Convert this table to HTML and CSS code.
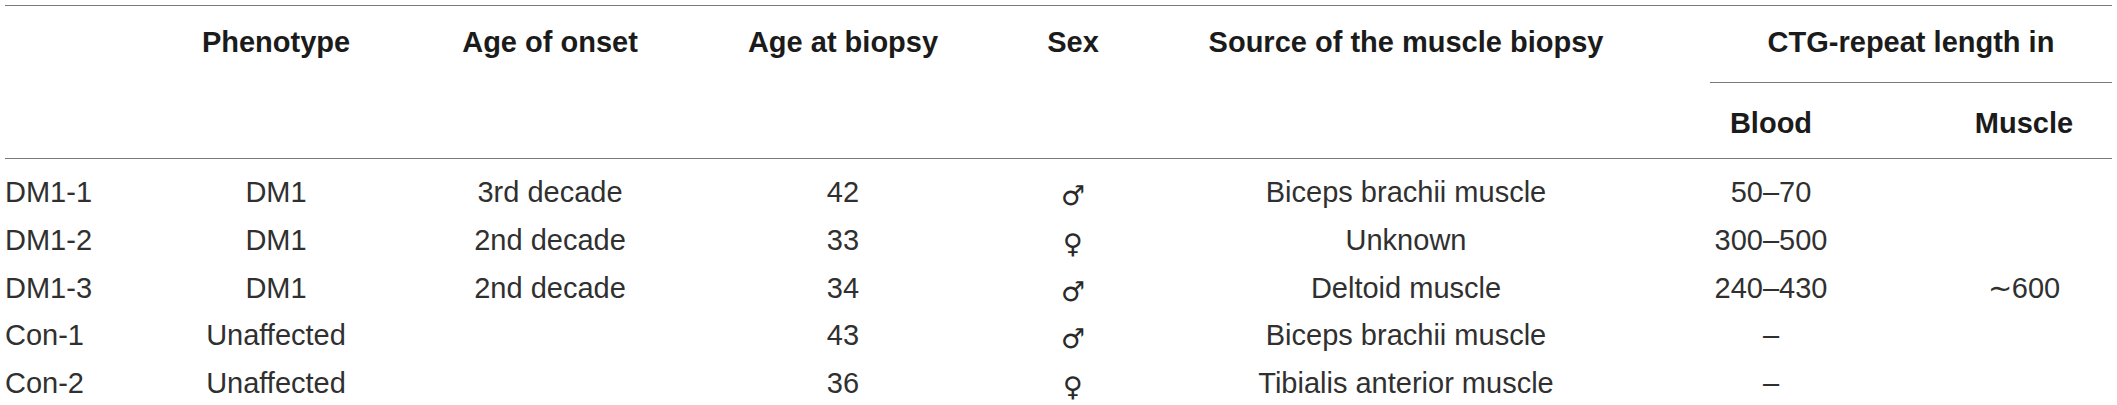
FILE: index.html
```html
<!DOCTYPE html>
<html lang="en">
<head>
<meta charset="utf-8">
<title>Table</title>
<link rel="stylesheet" href="styles.css">
</head>
<body>
<table class="data">
  <colgroup>
    <col class="c-id">
    <col class="c-phen">
    <col class="c-onset">
    <col class="c-age">
    <col class="c-sex">
    <col class="c-src">
    <col class="c-blood">
    <col class="c-muscle">
  </colgroup>
  <thead>
    <tr class="h1">
      <th rowspan="2" class="left"></th>
      <th rowspan="2">Phenotype</th>
      <th rowspan="2">Age of onset</th>
      <th rowspan="2">Age at biopsy</th>
      <th rowspan="2">Sex</th>
      <th rowspan="2">Source of the muscle biopsy</th>
      <th colspan="2" class="group">CTG-repeat length in</th>
    </tr>
    <tr class="h2">
      <th>Blood</th>
      <th class="muscle">Muscle</th>
    </tr>
  </thead>
  <tbody>
    <tr>
      <td class="left">DM1-1</td><td>DM1</td><td>3rd decade</td><td>42</td><td class="sex"><span class="sym">♂</span></td><td>Biceps brachii muscle</td><td>50–70</td><td class="muscle"></td>
    </tr>
    <tr>
      <td class="left">DM1-2</td><td>DM1</td><td>2nd decade</td><td>33</td><td class="sex"><span class="sym">♀</span></td><td>Unknown</td><td>300–500</td><td class="muscle"></td>
    </tr>
    <tr>
      <td class="left">DM1-3</td><td>DM1</td><td>2nd decade</td><td>34</td><td class="sex"><span class="sym">♂</span></td><td>Deltoid muscle</td><td>240–430</td><td class="muscle">∼600</td>
    </tr>
    <tr>
      <td class="left">Con-1</td><td>Unaffected</td><td></td><td>43</td><td class="sex"><span class="sym">♂</span></td><td>Biceps brachii muscle</td><td>–</td><td class="muscle"></td>
    </tr>
    <tr>
      <td class="left">Con-2</td><td>Unaffected</td><td></td><td>36</td><td class="sex"><span class="sym">♀</span></td><td>Tibialis anterior muscle</td><td>–</td><td class="muscle"></td>
    </tr>
  </tbody>
</table>
</body>
</html>
```

FILE: styles.css
```css
html, body {
  margin: 0;
  padding: 0;
  background: #ffffff;
}

body {
  padding: 5px 0 0 5px;
  font-family: "Liberation Sans", Arial, sans-serif;
  font-size: 29px;
  line-height: 33px;
  color: #303030;
}

.data {
  width: 2107px;
  table-layout: fixed;
  border-collapse: collapse;
  border-spacing: 0;
  border-top: 1px solid #7a7a7a;
}

.c-id { width: 89px; }
.c-phen { width: 364px; }
.c-onset { width: 184px; }
.c-age { width: 402px; }
.c-sex { width: 58px; }
.c-src { width: 608px; }
.c-blood { width: 122px; }
.c-muscle { width: 280px; }

th, td {
  padding: 0;
  text-align: center;
  white-space: nowrap;
  vertical-align: top;
}

th {
  font-weight: bold;
  color: #1b1b1b;
}

.left {
  text-align: left;
}

.h1 th {
  padding-top: 20px;
  padding-bottom: 23px;
}

.h1 th[rowspan] {
  border-bottom: 1px solid #7a7a7a;
}

.h1 th.group {
  border-bottom: 1px solid #7a7a7a;
}

.h2 th {
  padding-top: 24px;
  padding-bottom: 18px;
  border-bottom: 1px solid #7a7a7a;
}

.muscle {
  padding-left: 104px;
}

td {
  height: 47.75px;
  line-height: 47.75px;
  vertical-align: middle;
}

tbody tr:first-child td {
  padding-top: 10px;
}

td.sex {
  font-family: "DejaVu Sans", sans-serif;
  font-size: 27px;
  color: #2a2a2a;
}

.sym {
  line-height: 0;
  vertical-align: -3px;
}
```
